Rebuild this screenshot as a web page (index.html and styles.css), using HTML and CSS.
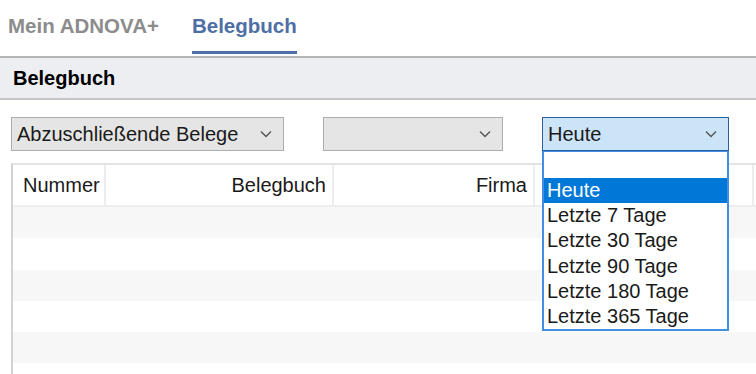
FILE: index.html
```html
<!DOCTYPE html>
<html lang="de">

<head>
    <meta charset="UTF-8">
    <meta name="viewport" content="width=device-width, initial-scale=1.0">
    <title>Belegbuch</title>
    <link rel="stylesheet" href="styles.css">
</head>

<body>
    <!-- Tabs -->
    <nav class="tabs">
        <a href="#" class="tab">Mein ADNOVA+</a>
        <a href="#" class="tab active">Belegbuch</a>
    </nav>

    <!-- Titelleiste -->
    <div class="section-title">Belegbuch</div>

    <!-- Filter -->
    <div class="filters">
        <div class="select select-status">
            <span>Abzuschließende Belege</span>
            <svg class="chevron" viewBox="0 0 12 8"><path d="M1 1.5 L6 6.5 L11 1.5" /></svg>
        </div>
        <div class="select select-company">
            <span></span>
            <svg class="chevron" viewBox="0 0 12 8"><path d="M1 1.5 L6 6.5 L11 1.5" /></svg>
        </div>
        <div class="select select-period open">
            <span>Heute</span>
            <svg class="chevron" viewBox="0 0 12 8"><path d="M1 1.5 L6 6.5 L11 1.5" /></svg>
            <ul class="dropdown">
                <li class="empty"></li>
                <li class="selected">Heute</li>
                <li>Letzte 7 Tage</li>
                <li>Letzte 30 Tage</li>
                <li>Letzte 90 Tage</li>
                <li>Letzte 180 Tage</li>
                <li>Letzte 365 Tage</li>
            </ul>
        </div>
    </div>

    <!-- Tabelle -->
    <div class="grid">
        <div class="grid-head">
            <div class="col col-nr">Nummer</div>
            <div class="col col-book">Belegbuch</div>
            <div class="col col-firm">Firma</div>
            <div class="col col-date">Datum</div>
            <div class="col col-rest"></div>
        </div>
        <div class="grid-row odd"></div>
        <div class="grid-row"></div>
        <div class="grid-row odd"></div>
        <div class="grid-row"></div>
        <div class="grid-row odd"></div>
        <div class="grid-row"></div>
    </div>
</body>

</html>
```

FILE: styles.css
```css
/* Basis */
body {
    font-family: "Liberation Sans", Arial, sans-serif;
    margin: 0;
    padding: 0;
    width: 756px;
    height: 374px;
    overflow: hidden;
    background: #fff;
    color: #1a1a1a;
}

/* Tabs oben */
.tabs {
    display: flex;
    align-items: flex-start;
    gap: 33px;
    height: 56px;
    padding-left: 8px;
    border-bottom: 2px solid #b4b4b4;
}

.tab {
    font-size: 20.5px;
    font-weight: bold;
    color: #8c8c8c;
    text-decoration: none;
    height: 51px;
    line-height: 51px;
}

.tab.active {
    color: #4d6fa6;
    border-bottom: 3px solid #4d6fa6;
}

/* Titelleiste */
.section-title {
    height: 40px;
    line-height: 40px;
    padding-left: 13px;
    font-size: 20px;
    font-weight: bold;
    color: #000;
    background: #eceef1;
    border-bottom: 2px solid #c4c4c4;
}

/* Filterzeile */
.filters {
    display: flex;
    gap: 39px;
    padding: 17px 0 0 11px;
}

.select {
    position: relative;
    display: flex;
    align-items: center;
    justify-content: space-between;
    box-sizing: border-box;
    height: 34px;
    padding: 0 11px 0 5px;
    font-size: 20px;
    background: #e5e5e5;
    border: 1px solid #adadad;
}

.select-status {
    width: 273px;
}

.select-company {
    width: 180px;
}

.select-period {
    width: 187px;
    background: #cce4f7;
    border-color: #2e5f9c;
    z-index: 2;
}

.chevron {
    width: 12px;
    height: 8px;
    fill: none;
    stroke: #555;
    stroke-width: 1.4;
}

/* Aufgeklappte Liste */
.dropdown {
    position: absolute;
    top: 33px;
    left: -1px;
    width: 187px;
    box-sizing: border-box;
    margin: 0;
    padding: 0;
    list-style: none;
    background: #fff;
    border: 2px solid #3f8fe2;
    border-top-width: 1px;
}

.dropdown li {
    height: 25.2px;
    line-height: 25px;
    padding-left: 3px;
    font-size: 20px;
    color: #1a1a1a;
}

.dropdown li.empty {
    height: 26px;
}

.dropdown li.selected {
    background: #0078d7;
    color: #fff;
}

/* Tabelle */
.grid {
    margin: 12px 0 0 11px;
    height: 209px;
    overflow: hidden;
    border-top: 2px solid #e3e3e3;
    border-left: 2px solid #d2d2d2;
}

.grid-head {
    display: flex;
    height: 40px;
    border-bottom: 2px solid #ededed;
}

.col {
    flex-shrink: 0;
    box-sizing: border-box;
    line-height: 40px;
    font-size: 20px;
    padding: 0 6px 0 10px;
    border-right: 2px solid #ededed;
    text-align: right;
    white-space: nowrap;
}

.col-nr {
    width: 93px;
    text-align: left;
}

.col-book {
    width: 228px;
}

.col-firm {
    width: 201px;
}

.col-date {
    width: 219px;
    color: #fff;
}

.col-rest {
    flex: 1;
    border-right: none;
}

.grid-row {
    height: 31.3px;
}

.grid-row.odd {
    background: #f7f7f7;
}
```
